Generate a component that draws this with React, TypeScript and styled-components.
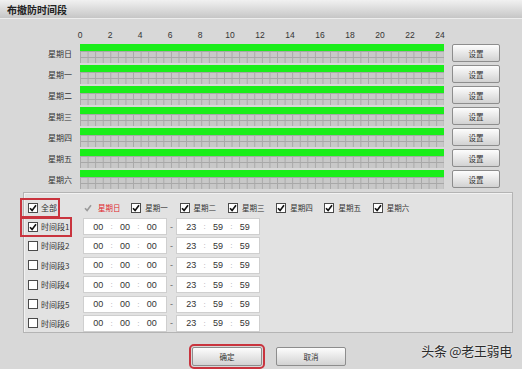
import React from 'react'
import styled, { createGlobalStyle } from 'styled-components'

const GlobalStyle = createGlobalStyle`
    html, body {
        margin: 0;
        padding: 0;
        background: #d8d8d8;
    }
    body {
        font-family: "Liberation Sans", "Noto Sans CJK SC", sans-serif;
        color: #333;
    }
`

const DAYS = ['星期日', '星期一', '星期二', '星期三', '星期四', '星期五', '星期六']
const HOURS = [0, 2, 4, 6, 8, 10, 12, 14, 16, 18, 20, 22, 24]
const SEGMENTS = [1, 2, 3, 4, 5, 6]

const Dialog = styled.div`
    position: relative;
    width: 522px;
    height: 369px;
    background: #d8d8d8;
    overflow: hidden;
    display: flex;
    flex-direction: column;
`

const TitleBar = styled.div`
    height: 18px;
    flex-shrink: 0;
    display: flex;
    align-items: center;
    padding-left: 7px;
    background: linear-gradient(to bottom, #f1f1f1, #c6c6c6);
    border-bottom: 1px solid #ededed;
    font-family: "Noto Sans CJK SC", sans-serif;
    font-size: 10px;
    font-weight: 700;
    color: #222;
`

const Schedule = styled.div`
    padding-top: 9px;
    display: flex;
    flex-direction: column;
`

const Scale = styled.div`
    display: flex;
    margin-left: 65px;
    height: 14px;
    margin-bottom: 2px;
`

const ScaleLabel = styled.div`
    width: 30px;
    text-align: center;
    font-size: 8.5px;
    line-height: 14px;
    color: #333;
`

const DayRow = styled.div`
    display: flex;
    align-items: stretch;
    height: 19px;
    margin-bottom: 2px;
`

const DayLabel = styled.div`
    width: 72px;
    margin-right: 8px;
    display: flex;
    align-items: center;
    justify-content: flex-end;
    font-family: "Noto Sans CJK SC", sans-serif;
    font-size: 8px;
    color: #333;
`

const Timeline = styled.div`
    width: 364px;
    background-color: #c8c8c8;
    background-image: linear-gradient(to right, #a8a8a8 1px, transparent 1px),
        linear-gradient(to bottom, #a8a8a8 1px, transparent 1px);
    background-size: 7.583px 6px;
    background-position: 0 7px;
`

const Armed = styled.div`
    height: 7px;
    background: #1aee1a;
`

const Button = styled.button<{ $wide?: boolean; $marked?: boolean }>`
    box-sizing: border-box;
    width: ${p => (p.$wide ? '70px' : '48px')};
    height: ${p => (p.$wide ? '19px' : '18px')};
    padding: 0;
    border: 1px solid #8d8d8d;
    border-radius: 2px;
    background: linear-gradient(to bottom, #fdfdfd, #d2d2d2);
    font-family: "Noto Sans CJK SC", sans-serif;
    font-size: 7.5px;
    color: #333;
    outline: ${p => (p.$marked ? '2px solid #c9343e' : 'none')};
    outline-offset: 1px;
`

const SetButton = styled(Button)`
    margin-left: 8px;
`

const Panel = styled.div`
    box-sizing: border-box;
    margin: 1px 0 0 23px;
    width: 490px;
    height: 141px;
    border: 1px solid #b4b4b4;
    box-shadow: inset 1px 1px 0 #f2f2f2;
    background: #e2e2e2;
    padding: 6px 0 0 4px;
    display: flex;
    flex-direction: column;
    gap: 2px;
`

const PanelRow = styled.div`
    display: flex;
    align-items: center;
    height: 17px;
`

const SegmentList = styled.div`
    display: flex;
    flex-direction: column;
    gap: 2.4px;
`

const Lead = styled.div`
    width: 55px;
    display: flex;
    align-items: center;
`

const Marked = styled.div<{ $marked?: boolean }>`
    display: inline-flex;
    align-items: center;
    gap: 3px;
    margin-left: -6px;
    padding: 0 1px 0 6px;
    height: 16px;
    font-family: "Noto Sans CJK SC", sans-serif;
    font-size: 8px;
    color: #333;
    outline: ${p => (p.$marked ? '2px solid #c9343e' : 'none')};
`

const Box = styled.span<{ $plain?: boolean }>`
    box-sizing: border-box;
    width: 10px;
    height: 10px;
    display: inline-flex;
    align-items: center;
    justify-content: center;
    background: ${p => (p.$plain ? 'transparent' : '#fff')};
    border: 1px solid ${p => (p.$plain ? 'transparent' : '#4a4a4a')};
`

const DayItem = styled.div<{ $active?: boolean }>`
    width: 48.3px;
    display: flex;
    align-items: center;
    gap: ${p => (p.$active ? '5px' : '4px')};
    font-family: "Noto Sans CJK SC", sans-serif;
    font-size: 7.5px;
    color: ${p => (p.$active ? '#e0282e' : '#333')};
`

const TimeBox = styled.div`
    box-sizing: border-box;
    width: 84px;
    height: 17px;
    padding: 0 4px;
    display: grid;
    grid-template-columns: 1fr 6px 1fr 6px 1fr;
    align-items: center;
    background: #fff;
    border: 1px solid #cfcfcf;
    font-size: 9px;
    color: #333;
    text-align: center;
`

const Colon = styled.span`
    color: #aaa;
    font-size: 8px;
`

const Dash = styled.span`
    width: 9px;
    text-align: center;
    font-size: 9px;
    color: #666;
`

const Footer = styled.div`
    display: flex;
    gap: 14px;
    padding: 14px 0 0 192px;
`

const Watermark = styled.div`
    position: absolute;
    right: 10px;
    bottom: 9px;
    font-family: "Noto Sans CJK SC", sans-serif;
    font-size: 13px;
    color: #2b2b2b;
    text-shadow: 0 0 2px #fff;
    letter-spacing: -0.3px;
`

const Check = ({ color = '#111' }: { color?: string }) => (
    <svg width="8" height="8" viewBox="0 0 8 8">
        <path d="M1 4.2 L3.1 6.4 L7 1.2" fill="none" stroke={color} strokeWidth="1.6" />
    </svg>
)

const Checkbox = ({ checked, plain }: { checked?: boolean; plain?: boolean }) => (
    <Box $plain={plain}>{checked && <Check color={plain ? '#9a9a9a' : '#111'} />}</Box>
)

const TimeField = ({ value }: { value: string[] }) => (
    <TimeBox>
        <span>{value[0]}</span>
        <Colon>:</Colon>
        <span>{value[1]}</span>
        <Colon>:</Colon>
        <span>{value[2]}</span>
    </TimeBox>
)

const App = () => {
    return (
        <Dialog>
            <GlobalStyle />
            <TitleBar>布撤防时间段</TitleBar>
            <Schedule>
                <Scale>
                    {HOURS.map(h => (
                        <ScaleLabel key={h}>{h}</ScaleLabel>
                    ))}
                </Scale>
                {DAYS.map(day => (
                    <DayRow key={day}>
                        <DayLabel>{day}</DayLabel>
                        <Timeline>
                            <Armed style={{ width: '100%' }} />
                        </Timeline>
                        <SetButton>设置</SetButton>
                    </DayRow>
                ))}
            </Schedule>
            <Panel>
                <PanelRow>
                    <Lead>
                        <Marked $marked>
                            <Checkbox checked />
                            全部
                        </Marked>
                    </Lead>
                    {DAYS.map((day, i) => (
                        <DayItem key={day} $active={i === 0}>
                            <Checkbox checked plain={i === 0} />
                            {day}
                        </DayItem>
                    ))}
                </PanelRow>
                <SegmentList>
                    {SEGMENTS.map(n => (
                        <PanelRow key={n}>
                            <Lead>
                                <Marked $marked={n === 1}>
                                    <Checkbox checked={n === 1} />
                                    时间段{n}
                                </Marked>
                            </Lead>
                            <TimeField value={['00', '00', '00']} />
                            <Dash>-</Dash>
                            <TimeField value={['23', '59', '59']} />
                        </PanelRow>
                    ))}
                </SegmentList>
            </Panel>
            <Footer>
                <Button $wide $marked>确定</Button>
                <Button $wide>取消</Button>
            </Footer>
            <Watermark>头条 @老王弱电</Watermark>
        </Dialog>
    )
}

export default App
